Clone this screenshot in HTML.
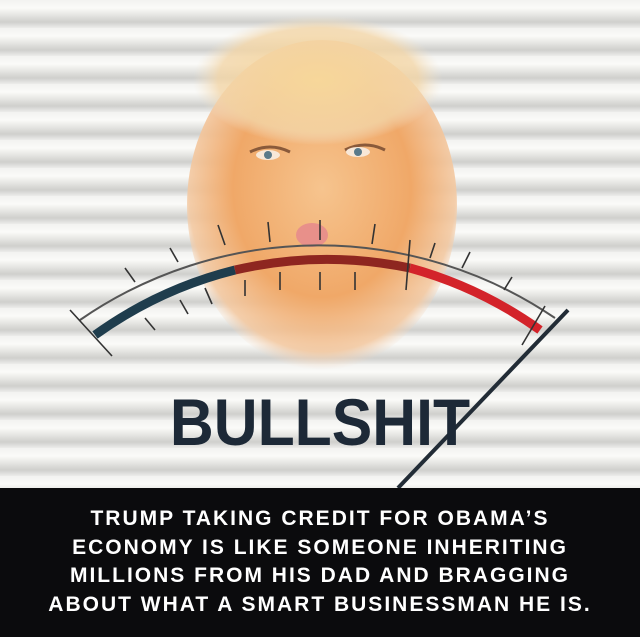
<!DOCTYPE html>
<html><head><meta charset="utf-8"><style>
html,body{margin:0;padding:0}
body{width:640px;height:637px;position:relative;overflow:hidden;background:#e8e8e6;font-family:"Liberation Sans",sans-serif}
.bg{position:absolute;left:0;top:0;width:640px;height:488px;
background:repeating-linear-gradient(180deg,#f2f2f0 0px,#fafaf8 8px,#e2e2df 16px,#cfcfcc 22px,#ececea 28px);}
.band{position:absolute;left:0;top:488px;width:640px;height:149px;background:#0b0b0d;color:#fff;text-align:center;font-weight:bold;font-size:21px;line-height:28.5px;padding-top:17px;box-sizing:border-box;letter-spacing:2px}
.bs{position:absolute;left:0;width:640px;top:384px;text-align:center;font-weight:bold;font-size:66px;color:#1d2937;transform:scaleX(0.92);}
svg{position:absolute;left:0;top:0}
</style></head><body>
<div class="bg"></div>
<svg width="640" height="488" viewBox="0 0 640 488">
<defs>
<radialGradient id="f" cx="50%" cy="45%" r="55%">
<stop offset="0" stop-color="#f6c48e"/>
<stop offset="0.6" stop-color="#f0a868"/>
<stop offset="0.9" stop-color="#f3c9a2" stop-opacity="0.9"/>
<stop offset="1" stop-color="#f3dcc8" stop-opacity="0"/>
</radialGradient>
<radialGradient id="h" cx="50%" cy="50%" r="50%">
<stop offset="0" stop-color="#f7d79a"/>
<stop offset="0.8" stop-color="#f3d6a8" stop-opacity="0.8"/>
<stop offset="1" stop-color="#f3e6d0" stop-opacity="0"/>
</radialGradient>
</defs>
<ellipse cx="322" cy="205" rx="135" ry="165" fill="url(#f)"/>
<ellipse cx="318" cy="80" rx="125" ry="65" fill="url(#h)"/>
<path d="M250 152 q20 -10 40 0 M345 150 q20 -10 40 0" stroke="#8a5a3a" stroke-width="3" fill="none"/>
<ellipse cx="268" cy="155" rx="12" ry="5" fill="#f8e8d8"/><circle cx="268" cy="155" r="4" fill="#5a7a8a"/>
<ellipse cx="358" cy="152" rx="12" ry="5" fill="#f8e8d8"/><circle cx="358" cy="152" r="4" fill="#5a7a8a"/>
<ellipse cx="312" cy="235" rx="16" ry="12" fill="#e8908a"/>
<path d="M80 320 A420 420 0 0 1 555 318" stroke="#555" stroke-width="2" fill="none"/>
<path d="M95 335 A410 410 0 0 1 235 270" stroke="#1f3d4d" stroke-width="9" fill="none"/>
<path d="M235 270 A410 410 0 0 1 410 268" stroke="#8e2620" stroke-width="9" fill="none"/>
<path d="M410 268 A410 410 0 0 1 540 330" stroke="#d3232a" stroke-width="9" fill="none"/>
<g stroke="#333" stroke-width="1.6">
<line x1="70" y1="310" x2="112" y2="356"/>
<line x1="125" y1="268" x2="135" y2="282"/><line x1="145" y1="318" x2="155" y2="330"/>
<line x1="170" y1="248" x2="178" y2="262"/><line x1="180" y1="300" x2="188" y2="314"/>
<line x1="205" y1="288" x2="212" y2="304"/><line x1="218" y1="225" x2="225" y2="245"/>
<line x1="245" y1="280" x2="245" y2="296"/><line x1="268" y1="222" x2="270" y2="242"/>
<line x1="280" y1="272" x2="280" y2="290"/><line x1="320" y1="220" x2="320" y2="240"/>
<line x1="320" y1="272" x2="320" y2="290"/><line x1="355" y1="272" x2="355" y2="290"/>
<line x1="375" y1="224" x2="372" y2="244"/><line x1="410" y1="240" x2="406" y2="290"/>
<line x1="435" y1="243" x2="430" y2="258"/><line x1="470" y1="252" x2="462" y2="268"/>
<line x1="512" y1="277" x2="504" y2="290"/><line x1="545" y1="306" x2="522" y2="345"/>
</g>
<line x1="568" y1="310" x2="398" y2="488" stroke="#222c36" stroke-width="4"/>
</svg>
<div class="bs">BULLSHIT</div>
<div class="band">TRUMP TAKING CREDIT FOR OBAMA’S<br>ECONOMY IS LIKE SOMEONE INHERITING<br>MILLIONS FROM HIS DAD AND BRAGGING<br>ABOUT WHAT A SMART BUSINESSMAN HE IS.</div>
</body></html>
